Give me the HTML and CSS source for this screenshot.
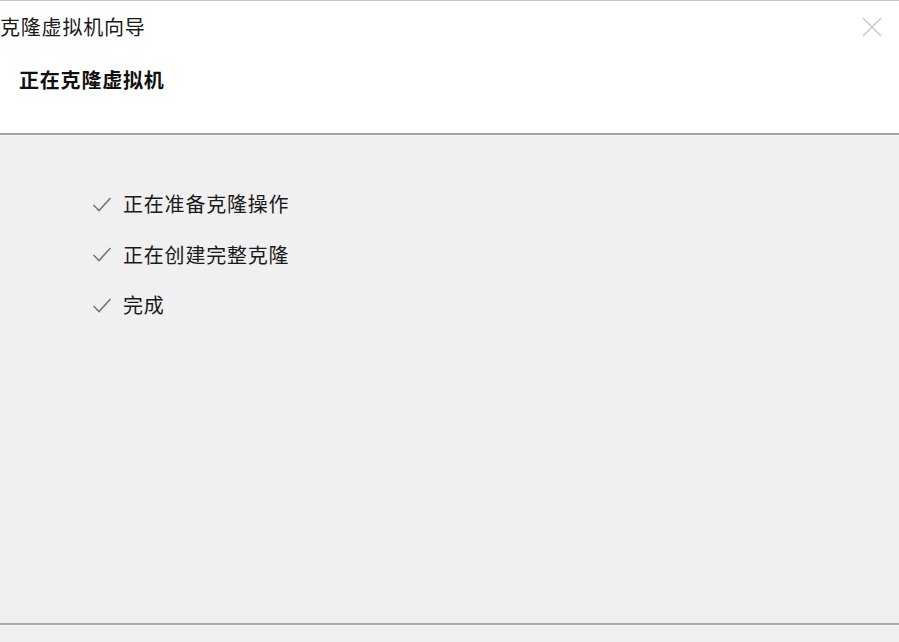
FILE: index.html
```html
<!DOCTYPE html>
<html lang="zh-CN">
<head>
<meta charset="utf-8">
<link rel="stylesheet" href="styles.css">
</head>
<body>
<div class="window">
  <header class="header">
    <div class="titlebar">
      <span class="title">克隆虚拟机向导</span>
      <svg class="close" width="20" height="20" viewBox="0 0 20 20"><path d="M1 1L19 19M19 1L1 19" stroke="#c4c4c4" stroke-width="1.3" fill="none"/></svg>
    </div>
    <div class="subtitle">正在克隆虚拟机</div>
  </header>
  <main class="content">
    <ul class="steps">
      <li class="step"><svg class="check" width="20" height="17" viewBox="0 0 20 17"><path d="M1.5 9L7 14.5L18.5 2" stroke="#757575" stroke-width="1.6" fill="none"/></svg><span>正在准备克隆操作</span></li>
      <li class="step"><svg class="check" width="20" height="17" viewBox="0 0 20 17"><path d="M1.5 9L7 14.5L18.5 2" stroke="#757575" stroke-width="1.6" fill="none"/></svg><span>正在创建完整克隆</span></li>
      <li class="step"><svg class="check" width="20" height="17" viewBox="0 0 20 17"><path d="M1.5 9L7 14.5L18.5 2" stroke="#757575" stroke-width="1.6" fill="none"/></svg><span>完成</span></li>
    </ul>
  </main>
  <footer class="footer"></footer>
</div>
</body>
</html>
```
FILE: styles.css
```css
html, body {
  margin: 0;
  padding: 0;
  width: 899px;
  height: 642px;
  overflow: hidden;
  background: #f0f0f0;
  font-family: "Noto Sans CJK SC", "Microsoft YaHei", sans-serif;
}
.window {
  display: flex;
  flex-direction: column;
  height: 642px;
}
.header {
  background: #ffffff;
  border-top: 1px solid #c6c6c6;
  height: 132px;
  border-bottom: 2px solid #a4a4a4;
  box-sizing: content-box;
}
.titlebar {
  display: flex;
  justify-content: space-between;
  align-items: flex-start;
  height: 52px;
}
.title {
  font-size: 20px;
  line-height: 20px;
  color: #1a1a1a;
  margin-top: 16px;
  letter-spacing: 0.8px;
}
.close {
  margin-top: 16px;
  margin-right: 17px;
}
.subtitle {
  font-size: 20px;
  line-height: 20px;
  font-weight: bold;
  color: #111;
  padding-left: 19px;
  margin-top: 17px;
  letter-spacing: 0.8px;
}
.content {
  flex: 1;
  border-top: 1px solid #f8f8f8;
  border-bottom: 2px solid #a8a8a8;
}
.steps {
  list-style: none;
  margin: 0;
  padding: 58px 0 0 92px;
  display: flex;
  flex-direction: column;
  gap: 30.5px;
}
.step {
  display: flex;
  align-items: center;
  gap: 11px;
  font-size: 20px;
  line-height: 20px;
  color: #1a1a1a;
  letter-spacing: 0.8px;
}
.check {
  flex: none;
}
.footer {
  height: 16px;
  border-top: 1px solid #fafafa;
}
```
